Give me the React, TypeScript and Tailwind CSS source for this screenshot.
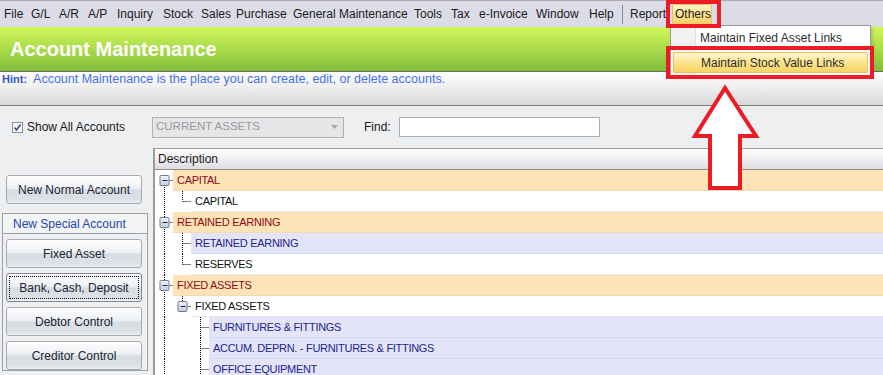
import React from 'react'

type Row = {
  text: string
  level: number
  parent?: boolean
  last?: boolean
  first?: boolean
  guides: number[]
  tone: 'group' | 'blue' | 'plain'
}

const menus: [string, number][] = [
  ['File', 27], ['G/L', 28], ['A/R', 29], ['A/P', 29], ['Inquiry', 46], ['Stock', 38],
  ['Sales', 35], ['Purchase', 57], ['General Maintenance', 121], ['Tools', 37], ['Tax', 28],
  ['e-Invoice', 57], ['Window', 53], ['Help', 33],
]

const rows: Row[] = [
  { text: 'CAPITAL', level: 0, parent: true, first: true, guides: [], tone: 'group' },
  { text: 'CAPITAL', level: 1, last: true, guides: [0], tone: 'plain' },
  { text: 'RETAINED EARNING', level: 0, parent: true, guides: [], tone: 'group' },
  { text: 'RETAINED EARNING', level: 1, guides: [0], tone: 'blue' },
  { text: 'RESERVES', level: 1, last: true, guides: [0], tone: 'plain' },
  { text: 'FIXED ASSETS', level: 0, parent: true, guides: [], tone: 'group' },
  { text: 'FIXED ASSETS', level: 1, parent: true, last: true, guides: [0], tone: 'plain' },
  { text: 'FURNITURES & FITTINGS', level: 2, guides: [0], tone: 'blue' },
  { text: 'ACCUM. DEPRN. - FURNITURES & FITTINGS', level: 2, guides: [0], tone: 'blue' },
  { text: 'OFFICE EQUIPMENT', level: 2, guides: [0], tone: 'blue' },
]

const btnBg =
  'bg-[linear-gradient(to_bottom,#fdfdfe_0%,#eef1f4_45%,#d8dde4_52%,#dce1e7_88%,#edf0f3_100%)]'

function Btn({ label, focus }: { label: string; focus?: boolean }) {
  return (
    <div
      className={`h-[29px] w-[136px] rounded-[3px] border ${focus ? 'border-[#7f8893]' : 'border-[#a6abb2]'} ${btnBg} p-[2px]`}
    >
      <div
        className={`flex h-full items-center justify-center text-[12px] text-[#1b2433] ${focus ? 'border border-dotted border-black' : ''}`}
      >
        {label}
      </div>
    </div>
  )
}

function Lines({ row }: { row: Row }) {
  const w = 18 * (row.level + 1)
  const col = (k: number) => 9 + 18 * k + 0.5
  const mid = 10.5
  const dash = { stroke: '#000', strokeWidth: 1, strokeDasharray: '1 1' }
  const c = col(row.level)
  return (
    <svg width={w} height={21} className="shrink-0">
      {row.guides.map(k => (
        <line key={k} x1={col(k)} y1={0} x2={col(k)} y2={21} {...dash} />
      ))}
      {row.parent ? (
        <>
          {!row.first && <line x1={c} y1={0} x2={c} y2={6} {...dash} />}
          {row.level === 0 && <line x1={c} y1={15} x2={c} y2={21} {...dash} />}
          <line x1={c + 5} y1={mid} x2={w} y2={mid} {...dash} />
          <rect x={c - 4.5} y={5.5} width={9} height={10} rx={1} fill="url(#exp)" stroke="#6e7f95" />
          <line x1={c - 2} y1={mid} x2={c + 3} y2={mid} stroke="#1d2a4a" strokeWidth={1} />
        </>
      ) : (
        <>
          <line x1={c} y1={0} x2={c} y2={row.last ? mid : 21} {...dash} />
          <line x1={c} y1={mid} x2={w} y2={mid} {...dash} />
        </>
      )}
    </svg>
  )
}

export default function App() {
  return (
    <div
      className="relative h-[375px] w-[883px] overflow-hidden bg-[#eeeff1] text-[12px] text-[#1a1a1a]"
      style={{ fontFamily: '"Liberation Sans", Arial, sans-serif' }}
    >
      <svg width="0" height="0" className="absolute">
        <defs>
          <linearGradient id="exp" x1="0" y1="0" x2="0" y2="1">
            <stop offset="0" stopColor="#f4f6fa" />
            <stop offset="1" stopColor="#c3ccd8" />
          </linearGradient>
        </defs>
      </svg>

      {/* Menu bar */}
      <div className="flex h-[27px] items-center border-t border-[#a9a9b4] bg-[#dcdce8] pl-[4px]">
        {menus.map(([m, w]) => (
          <div key={m} style={{ width: w }} className="shrink-0 whitespace-nowrap">
            {m}
          </div>
        ))}
        <div className="h-[19px] w-[8px] shrink-0">
          <div className="h-full w-px bg-[#8a8a96]" />
        </div>
        <div className="w-[42px] shrink-0">Report</div>
        <div className="flex h-[21px] w-[40px] shrink-0 items-center rounded-[2px] border border-[#e4bf6a] bg-[linear-gradient(to_bottom,#fff6c8,#fde08a_55%,#f8cf62)] pl-[2px]">
          Others
        </div>
      </div>

      {/* Title */}
      <div className="flex h-[45px] items-center border-b border-[#6b6b60] bg-[linear-gradient(to_bottom,#d2f65c,#a9dc49_50%,#82bd3a)] pl-[10px]">
        <div className="text-[20px] font-bold text-white">Account Maintenance</div>
      </div>

      {/* Hint */}
      <div className="h-[34px] border-b border-[#7a7a72] bg-[linear-gradient(to_bottom,#ffffff,#f1f1f1_40%,#d9d9d9)] pl-[2px] leading-[15px]">
        <span className="text-[11px] font-bold text-[#3656c4]">Hint:</span>
        <span className="ml-[6px] text-[12.5px] text-[#4670ea]">
          Account Maintenance is the place you can create, edit, or delete accounts.
        </span>
      </div>

      {/* Toolbar */}
      <div className="flex h-[42px] items-center">
        <div className="ml-[12px] flex h-[11px] w-[11px] items-center justify-center border border-[#8e8f92] bg-[#f6f7f9]">
          <svg width="9" height="9" viewBox="0 0 9 9">
            <path d="M1.5 4.5 L3.5 7 L7.5 1.5" fill="none" stroke="#34508a" strokeWidth="1.6" />
          </svg>
        </div>
        <div className="ml-[4px] w-[125px]">Show All Accounts</div>
        <div className="flex h-[21px] w-[192px] items-center justify-between border border-[#adb2b5] bg-[#e6e6e9] pl-[3px] pr-[5px] text-[11.5px] text-[#9a9a9c]">
          CURRENT ASSETS
          <svg width="7" height="4" viewBox="0 0 7 4">
            <path d="M0 0 H7 L3.5 4 Z" fill="#a5a7aa" />
          </svg>
        </div>
        <div className="ml-[20px] w-[35px]">Find:</div>
        <div className="h-[20px] w-[201px] border border-[#a9b0b6] bg-white" />
      </div>

      {/* Body */}
      <div className="flex">
        <div className="w-[153px] shrink-0">
          <div className="ml-[6px] mt-[27px]">
            <Btn label="New Normal Account" />
          </div>
          <div className="ml-[2px] mt-[9px] w-[146px] border border-[#9b9ea3]">
            <div className="flex h-[20px] items-center border-b border-[#9b9ea3] bg-[#f3f4f6] pl-[10px] text-[12px] text-[#2346a8]">
              New Special Account
            </div>
            <div className="flex flex-col gap-[5px] pl-[3px] pt-[5px]">
              <Btn label="Fixed Asset" />
              <Btn label="Bank, Cash, Deposit" focus />
              <Btn label="Debtor Control" />
              <Btn label="Creditor Control" />
            </div>
          </div>
        </div>

        <div className="flex-1 border-l-2 border-t border-[#9c9c9c] bg-white">
          <div className="flex h-[21px] items-center border-b border-[#8d8d8d] bg-[linear-gradient(to_bottom,#fdfdfd,#f0f0f2_50%,#dcdde1)] pl-[3px]">
            Description
          </div>
          {rows.map((r, i) => (
            <div key={i} className="flex h-[21px]">
              <Lines row={r} />
              <div
                className={`flex flex-1 items-center border-b pl-[4px] text-[11px] tracking-[-0.3px] ${
                  r.tone === 'group'
                    ? 'border-[#f2dcb8] bg-[#fde3b6] text-[#8e0a14]'
                    : r.tone === 'blue'
                      ? 'border-[#d6d8ec] bg-[#e3e4f8] text-[#1c2590]'
                      : 'border-[#e4e6ec] bg-white text-[#111]'
                }`}
              >
                {r.text}
              </div>
            </div>
          ))}
        </div>
      </div>

      {/* Others dropdown */}
      <div className="absolute left-[670px] top-[25px] flex h-[51px] w-[201px] border border-[#9a9a9a] bg-white shadow-[2px_2px_3px_rgba(0,0,0,0.15)]">
        <div className="w-[25px] border-r border-[#e0e0e0] bg-[#f1f1f1]" />
        <div className="flex-1" />
        <div className="absolute left-[29px] top-[3px] text-[12px] text-[#2d2d2d]">Maintain Fixed Asset Links</div>
        <div className="absolute left-[2px] top-[26px] flex h-[21px] w-[195px] items-center rounded-[2px] border border-[#e2c366] bg-[linear-gradient(to_bottom,#fff7cf,#fde38f_50%,#f9d264)] pl-[27px] text-[12px] text-[#2d2d2d]">
          Maintain Stock Value Links
        </div>
      </div>

      {/* Annotations */}
      <div className="absolute left-[666px] top-[0px] h-[28px] w-[55px] border-[4px] border-[#ed1c24]" />
      <div className="absolute left-[666px] top-[46px] h-[33px] w-[208px] border-[4px] border-[#ed1c24]" />
      <svg className="pointer-events-none absolute left-0 top-0" width="883" height="375">
        <polygon
          points="725,88 756,136 740,136 740,188 710,188 710,136 695,136"
          fill="#fff"
          stroke="#ed1c24"
          strokeWidth="4"
          strokeLinejoin="miter"
        />
      </svg>
    </div>
  )
}
